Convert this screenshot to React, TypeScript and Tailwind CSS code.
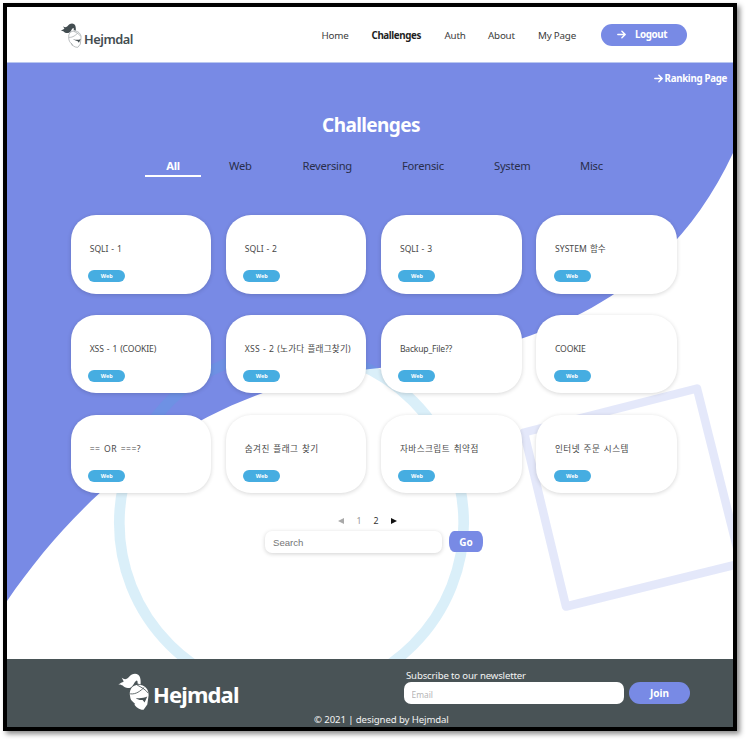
import React from "react";

const challenges = [
  { title: "SQLI - 1", spacing: "[word-spacing:0.6px]" },
  { title: "SQLI - 2", spacing: "[word-spacing:0.6px]" },
  { title: "SQLI - 3", spacing: "[word-spacing:0.6px]" },
  { title: "SYSTEM 함수", spacing: "[word-spacing:1px]" },
  { title: "XSS - 1 (COOKIE)", spacing: "tracking-[-0.1px] [word-spacing:0.8px]" },
  { title: "XSS - 2 (노가다 플래그찾기)", spacing: "tracking-[0.22px] [word-spacing:0.6px]" },
  { title: "Backup_File??", spacing: "tracking-[-0.2px]" },
  { title: "COOKIE", spacing: "tracking-[-0.2px]" },
  { title: "== OR ===?", spacing: "tracking-[0.45px] [word-spacing:1px]" },
  { title: "숨겨진 플래그 찾기", spacing: "tracking-[0.4px] [word-spacing:1px]" },
  { title: "자바스크립트 취약점", spacing: "tracking-[0.45px] [word-spacing:1px]" },
  { title: "인터넷 주문 시스템", spacing: "tracking-[0.4px] [word-spacing:1px]" },
];

function Plume({ fill }: { fill: string }) {
  return (
    <path
      fill={fill}
      d="M0 35C7 29 12 28 17 25L11 14C19 21 27 19 33 11C40 2 52-1 60 5C67 10 68 22 67 34L58 31C59 23 56 20 53 24C47 30 46 38 39 42C30 47 19 44 14 37C9 36 5 33 0 35Z"
    />
  );
}

function SolidKnight() {
  return (
    <svg className="h-[37px] w-[31px] shrink-0" viewBox="0 0 92 110">
      <Plume fill="#fff" />
      <path fill="#fff" d="M35 64C34 46 45 35 61 35C79 35 92 48 91 66L87 94L76 109C65 110 53 102 48 92C40 88 37 79 35 64Z" />
      <path fill="none" stroke="#495356" strokeWidth="2.5" d="M36 62C55 64 66 53 78 43M57 36C68 42 81 48 90 60" />
      <path fill="#495356" d="M53 74C64 77 77 74 87 70L79 88L73 80C66 81 58 79 53 74ZM37 79L51 92L48 94C42 90 38 86 37 79Z" />
    </svg>
  );
}

function OutlineKnight() {
  return (
    <svg className="h-[25px] w-[22px] shrink-0" viewBox="0 0 92 110">
      <Plume fill="#434d51" />
      <g fill="none" stroke="#a8adaf" strokeWidth="3.5">
        <path d="M36 66C33 47 45 35 62 35C79 35 92 50 90 66L87 93L76 107C64 108 52 100 48 90C40 86 37 77 36 66Z" />
        <path d="M37 63C55 65 67 52 79 42M57 36C69 42 82 48 89 59M47 88L53 101" />
      </g>
      <path fill="#434d51" d="M55 70C67 76 78 75 89 70L81 87L74 79C67 78 60 75 55 70Z" />
    </svg>
  );
}

function Arrow() {
  return (
    <svg className="h-[9px] w-[9px] shrink-0" viewBox="0 0 9 9" fill="none" stroke="white" strokeWidth="1.4" strokeLinecap="round" strokeLinejoin="round">
      <path d="M.8 4.5H8M4.9 1.2L8.2 4.5L4.9 7.8" />
    </svg>
  );
}

function Header() {
  return (
    <header className="flex h-[56px] shrink-0 border-b border-[#b9c7f0] bg-white">
      <div className="ml-[52.5px] mt-[16px] flex h-[26px]">
        <OutlineKnight />
        <span className="ml-[2.5px] mt-[7px] w-[60px] text-[12.8px] font-semibold leading-[18px] tracking-[-0.45px] text-[#434d51]">Hejmdal</span>
      </div>
      <nav className="ml-[177px] flex pt-[21px] text-[9.8px] leading-[16px] tracking-[-0.2px] text-[#3c3c3c]">
        <a className="w-[50.5px] pl-[0.5px]">Home</a>
        <a className="w-[73px] font-bold tracking-[-0.4px] text-[#1f1f1f]">Challenges</a>
        <a className="w-[43.5px]">Auth</a>
        <a className="w-[50px]">About</a>
        <a className="w-[63px]">My Page</a>
      </nav>
      <button className="mt-[17px] flex h-[21.5px] w-[86px] items-center rounded-full bg-[#788ae5] pl-[16px] text-[9.8px] font-bold text-white">
        <Arrow />
        <span className="ml-[9px] pt-px tracking-[-0.4px]">Logout</span>
      </button>
    </header>
  );
}

function Backdrop() {
  return (
    <svg className="absolute inset-0 h-[596px] w-[726px]" viewBox="7 63 726 596">
      <path fill="#788ae5" d="M7 63H733V153C663 303 530 353 370 369C210 385 90 480 7 601Z" />
      <circle cx="291.5" cy="523" r="172.2" fill="none" stroke="#46ade1" strokeOpacity=".2" strokeWidth="10.7" />
      <path d="M524 432.5L697 388.5L741 563.5L566 606.5Z" fill="none" stroke="#788ae5" strokeOpacity=".2" strokeWidth="8.5" strokeLinejoin="round" />
    </svg>
  );
}

function Card({ title, spacing }: { title: string; spacing: string }) {
  return (
    <article className="h-[78.7px] rounded-[25px] bg-white pl-[17.5px] pt-[26px] shadow-[0_1px_4px_rgba(0,0,0,0.16)]">
      <h2 className={`whitespace-nowrap pl-[1.5px] text-[8.6px] leading-[16px] text-[#484848] ${spacing}`}>{title}</h2>
      <div className="mt-[13.2px] flex h-[12px] w-[37px] items-center justify-center rounded-full bg-[#46ade1] text-[5.5px] font-bold leading-none text-white">
        <span className="pt-px">Web</span>
      </div>
    </article>
  );
}

function Main() {
  return (
    <main className="relative h-[596px] shrink-0 bg-white">
      <Backdrop />
      <div className="relative flex h-full flex-col">
        <a className="mr-[6px] mt-[7px] flex h-[16px] items-center justify-end text-[9.7px] font-bold tracking-[-0.3px] text-white">
          <Arrow />
          <span className="ml-[2px] pt-[2px]">Ranking Page</span>
        </a>
        <h1 className="mt-[25px] h-[28px] text-center text-[19px] font-bold leading-[28px] tracking-[-0.6px] text-white">
          <span className="pl-[2px]">Challenges</span>
        </h1>
        <div className="ml-[138px] mt-[17px] flex h-[21px] text-[11.2px] leading-[19px] tracking-[-0.25px] text-[#292e4b]">
          <span className="w-[56px] border-b-2 border-white text-center font-bold text-white">All</span>
          <span className="ml-[28px] w-[73.5px]">Web</span>
          <span className="w-[99.5px]">Reversing</span>
          <span className="w-[92px]">Forensic</span>
          <span className="w-[86px]">System</span>
          <span>Misc</span>
        </div>
        <section className="ml-[63.7px] mt-[38px] grid w-[606px] grid-cols-4 gap-x-[14.5px] gap-y-[21.1px]">
          {challenges.map((item) => (
            <Card key={item.title} title={item.title} spacing={item.spacing} />
          ))}
        </section>
        <div className="ml-[331px] mt-[20px] flex h-[16px] items-center text-[8.8px] text-[#333]">
          <svg className="h-[6px] w-[6px]" viewBox="0 0 6 6"><path d="M6 0V6L0 3Z" fill="#a9a9a9" /></svg>
          <span className="ml-[12.5px] w-[17px] text-[#999]">1</span>
          <span className="w-[17px]">2</span>
          <svg className="h-[6px] w-[6px]" viewBox="0 0 6 6"><path d="M0 0V6L6 3Z" fill="#111" /></svg>
        </div>
        <form className="ml-[258px] mt-[1.6px] flex h-[22px] gap-[7px]">
          <input
            placeholder="Search"
            className="w-[177px] rounded-[7px] bg-white px-[8px] pt-[2px] font-['Liberation_Sans',sans-serif] text-[9.6px] shadow-[0_1px_4px_rgba(0,0,0,0.18)] placeholder:text-[#757575]"
          />
          <button type="button" className="h-[21px] w-[34px] rounded-[5px/9px] bg-[#788ae5] pt-[2px] text-[10px] font-bold text-white">Go</button>
        </form>
      </div>
    </main>
  );
}

function Footer() {
  return (
    <footer className="flex-1 bg-[#495356] text-[#f3f4f4]">
      <div className="flex h-[51px]">
        <div className="ml-[111px] flex w-[285.5px] pt-[14px]">
          <SolidKnight />
          <span className="ml-[4px] mt-[7px] text-[22px] font-bold leading-[28px] tracking-[-0.85px] text-white">Hejmdal</span>
        </div>
        <div className="pt-[9px]">
          <p className="ml-[2.5px] h-[14px] whitespace-nowrap text-[9.6px] leading-[15px] tracking-[-0.15px]">Subscribe to our newsletter</p>
          <div className="flex gap-[5px]">
            <input placeholder="Email" className="h-[22px] w-[220.5px] rounded-[7px] bg-white px-[8px] pt-[2px] text-[8.4px] placeholder:text-[#b5b5b5]" />
            <button className="h-[22px] w-[61px] rounded-[11px] bg-[#788ae5] pt-px text-[10px] font-bold text-white">Join</button>
          </div>
        </div>
      </div>
      <p className="ml-[307px] mt-[2px] whitespace-nowrap text-[9.6px] leading-[15px] tracking-[-0.1px]">© 2021 | designed by Hejmdal</p>
    </footer>
  );
}

export default function App() {
  return (
    <div className="h-[740px] w-[746px] overflow-hidden bg-white pl-[3px] pt-[3px] font-['Noto_Sans','Noto_Sans_CJK_KR',sans-serif]">
      <div className="flex h-[728px] w-[734px] flex-col overflow-hidden border-4 border-black shadow-[3px_3px_5px_rgba(0,0,0,0.45)]">
        <Header />
        <Main />
        <Footer />
      </div>
    </div>
  );
}
